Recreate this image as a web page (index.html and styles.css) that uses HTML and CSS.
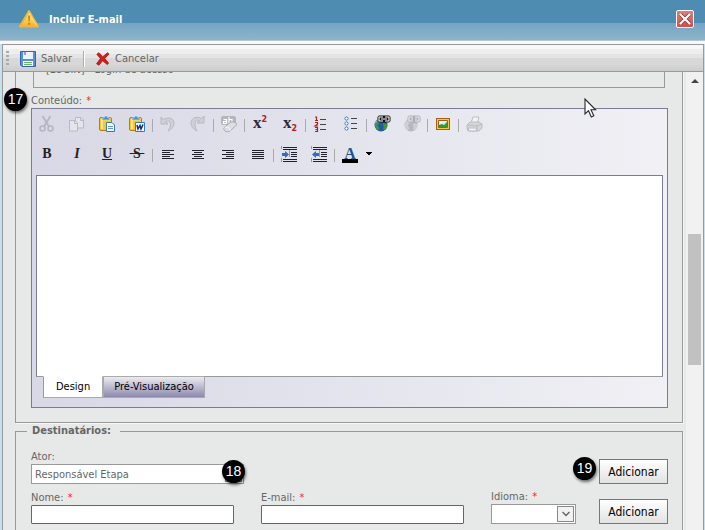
FILE: index.html
```html
<!DOCTYPE html>
<html lang="pt-BR">
<head>
<meta charset="utf-8">
<meta name="viewport" content="width=device-width, initial-scale=1">
<title>Incluir E-mail</title>
<link rel="stylesheet" href="styles.css">
</head>
<body>
<header class="titlebar">
  <svg class="warn" width="22" height="20" viewBox="0 0 22 20"><defs><linearGradient id="gw" x1="0" y1="0" x2="0" y2="1"><stop offset="0" stop-color="#fff0a0"/><stop offset=".5" stop-color="#fdd560"/><stop offset="1" stop-color="#f6ae2c"/></linearGradient></defs><path d="M11 2 20 17.500H2Z" fill="url(#gw)" stroke="#f2b53a" stroke-width="2" stroke-linejoin="round"/><path d="M11 3.500 18.500 16.500" stroke="#fff3b8" stroke-width="1" opacity=".6"/><path d="M10 6.500h2.200l-.5 6h-1.200z" fill="#c98a20"/><circle cx="11.100" cy="14.800" r="1.200" fill="#c98a20"/></svg>
  <h1>Incluir E-mail</h1>
  <button class="close" aria-label="Fechar"><svg width="18" height="18" viewBox="0 0 18 18"><defs><linearGradient id="gc" x1="0" y1="0" x2="0" y2="1"><stop offset="0" stop-color="#d98482"/><stop offset="1" stop-color="#d34b46"/></linearGradient></defs><rect x=".5" y=".5" width="17" height="17" rx="1.500" fill="url(#gc)" stroke="#fff"/><path d="M4.500 4.500 13.500 13.500M13.500 4.500 4.500 13.500" stroke="#833" stroke-width="3.600"/><path d="M4 4 14 14M14 4 4 14" stroke="#fff" stroke-width="2.200"/></svg></button>
</header>
<main class="frame">
  <nav class="commands">
    <span class="grip"></span>
    <button class="command"><svg width="16" height="16" viewBox="0 0 16 16"><path d="M.5.5h15v15H2L.5 14Z" fill="#5c8edc" stroke="#3562b4"/><path d="M3 1h10v7H3z" fill="#eaf3ff"/><path d="M3 1h3v3H3z" fill="#d8e8fb"/><path d="M5 1v3" stroke="#3562b4"/><path d="M3 10h10v5H3z" fill="#f6faf4"/><path d="M4 11.500h8M4 13.500h8" stroke="#69b65e"/></svg>Salvar</button>
    <span class="divider"></span>
    <button class="command"><svg width="14" height="14" viewBox="0 0 14 14"><path d="M.8 2.200 3 .7 6.800 4.700 11.500.8 13 2 8.800 6.500 12.600 11 11.300 12.600 6.600 8.700 3 13.200.6 11.800 4.400 6.500Z" fill="#ce2119" stroke="#aa1712" stroke-width=".8"/></svg>Cancelar</button>
  </nav>
  <div class="viewport">
    <div class="page">
      <section class="group message">
        <div class="hints">[LOGIN] - Login de acesso</div>
        <div class="label" id="content-label">Conteúdo: <i>*</i></div>
        <div class="editor">
          <div class="tools">
            <div class="set">
              <button aria-label="Recortar"><svg viewBox="0 0 18 18" fill="none" stroke="#b6b6c0"><path d="M4.500 1 11 11.500M12.500 1 6 11.500" stroke-width="1.800"/><circle cx="4.500" cy="13.500" r="2.500" stroke-width="1.600"/><circle cx="12.500" cy="13.500" r="2.500" stroke-width="1.600"/></svg></button>
              <button aria-label="Copiar"><svg viewBox="0 0 18 18" fill="#e4e4ec" stroke="#b9b9c2"><path d="M7.500 2.500H13L15.500 5v8h-8z"/><path d="M1.500 5.500H7L9.500 8v8h-8z"/><path d="M6.500 6v2.500H9M12.500 3v2.500H15"/></svg></button>
              <button aria-label="Colar"><svg viewBox="0 0 18 18"><rect x="1.500" y="2.500" width="12" height="13" rx="1.500" fill="#f6c62d" stroke="#b77c16"/><path d="M3 4h2v10H3" fill="#ffe785"/><path d="M4 3h2l1-2h2l1 2h2v2H4z" fill="#4f91c9" stroke="#dcebf4" stroke-width=".6"/><path d="M8.500 7.500H14l2.500 2.500v6.500h-8z" fill="#f6faff" stroke="#397bc0"/><path d="M10 11.500h5M10 13.500h5" stroke="#6499cf"/></svg></button>
              <button aria-label="Colar do Word"><svg viewBox="0 0 18 18"><rect x="1.500" y="2.500" width="12" height="13" rx="1.500" fill="#f6c62d" stroke="#b77c16"/><path d="M3 4h2v10H3" fill="#ffe785"/><path d="M4 3h2l1-2h2l1 2h2v2H4z" fill="#4f91c9" stroke="#dcebf4" stroke-width=".6"/><path d="M7.500 7.500h9v9h-9z" fill="#f6faff" stroke="#397bc0"/><path d="M9 10l1 4 2-3.500 1 3.500 2-4.500" fill="none" stroke="#172f7e" stroke-width="1.500"/></svg></button>
            </div>
            <div class="set">
              <button aria-label="Desfazer"><svg viewBox="0 0 18 18"><path d="M2 2v7h7L6.500 6.800C9 5.500 11.500 6.500 11.500 9c0 2.500-1 4.500-2.500 7 4-2 6-4.500 6-8C15 3 9 1.500 4.500 4.600Z" fill="#cfcfd8" stroke="#b4b4be" stroke-width=".9"/></svg></button>
              <button aria-label="Refazer"><svg viewBox="0 0 18 18"><path d="M15 1v7H8l2.500-2.200C8 4.500 6 6 6 9c0 2.500.5 4.500 2 7-4-2-6-4.500-6-8C2 3 8 .5 12.500 3.600Z" fill="#cfcfd8" stroke="#b4b4be" stroke-width=".9"/></svg></button>
            </div>
            <div class="set">
              <button aria-label="Limpar formatação"><svg viewBox="0 0 18 18"><rect x="1" y="1" width="15" height="9" rx="2" fill="#b5b5be"/><g fill="none" stroke="#fff" stroke-width="1.200"><path d="M3.500 4.500h3v4M6.500 6.500h-3v2h3M9 2v6.500h3v-4H9"/></g><path d="M4.500 12.500 10 7.500c1-1 5-.5 6 .5s.5 2-.5 3L10 16c-1 1-4 1-5 0s-2-2-.5-3.500Z" fill="#dddde3" stroke="#aaaab3"/><path d="M5 12.500c2-1 5 0 5.500 3" fill="none" stroke="#fff"/></svg></button>
            </div>
            <div class="set">
              <button class="script" aria-label="Sobrescrito">x<sup>2</sup></button>
              <button class="script" aria-label="Subscrito">x<sub>2</sub></button>
            </div>
            <div class="set">
              <button aria-label="Lista numerada"><svg viewBox="0 0 18 18"><path d="M8 4.500h6M8 9.500h6M8 14.500h6" stroke="#444"/><path d="M3 2h1.500v3.500M3 5.500h3M3 7.500h2.500v1.700L3 11h3M3 12.500h2.500v4H3M3.500 14.500h2" fill="none" stroke="#b3201b" stroke-width="1.200"/></svg></button>
              <button aria-label="Lista com marcadores"><svg viewBox="0 0 18 18"><path d="M9 3.500h6M9 8.500h6M9 13.500h6" stroke="#444"/><g fill="#fff" stroke="#3f7ac0"><circle cx="4.500" cy="3.500" r="1.600"/><circle cx="4.500" cy="8.500" r="1.600"/><circle cx="4.500" cy="13.500" r="1.600"/></g></svg></button>
            </div>
            <div class="set">
              <button aria-label="Inserir link"><svg viewBox="0 0 18 18"><circle cx="8" cy="10" r="6.500" fill="#1e5aa6"/><path d="M3 6c2-2 4-1 4 1s-3 2-2 4 2 3 0 4c-3-1-4-5-2-9ZM10 8l4 1c1 3-1 6-3 6-2-2 1-3-1-5Z" fill="#419539"/><path d="M2.500 8c1-2 2-3 4-3.500" stroke="#9cc9ec" fill="none"/><rect x="4.500" y=".5" width="13" height="7" rx="2" fill="#111"/><path d="M10 2H6v4h4M12 2h4v4h-4M8 4h6" fill="none" stroke="#fff" stroke-width="1.100"/></svg></button>
              <button aria-label="Remover link"><svg viewBox="0 0 18 18"><circle cx="8" cy="10" r="6.500" fill="#b8b8bf"/><path d="M3 6c2-2 4-1 4 1s-3 2-2 4 2 3 0 4c-3-1-4-5-2-9ZM10 8l4 1c1 3-1 6-3 6-2-2 1-3-1-5Z" fill="#cfcfd5"/><rect x="4.500" y=".5" width="13" height="7" rx="2" fill="#adadb5"/><path d="M10 2H6v4h4M12 2h4v4h-4M8 4h2M12 4h2" fill="none" stroke="#eee" stroke-width="1.100"/></svg></button>
            </div>
            <div class="set">
              <button aria-label="Inserir imagem"><svg viewBox="0 0 18 18"><rect x="2.500" y="3.500" width="13" height="11" fill="#f9c73d" stroke="#a95b14"/><path d="M4.500 5.500h9v7h-9z" fill="#d5edf9" stroke="#8b6717"/><path d="M5 10l3-1 2 1 3-3v5H5z" fill="#329735"/><circle cx="7" cy="7.500" r="1" fill="#fff"/></svg></button>
            </div>
            <div class="set">
              <button aria-label="Imprimir"><svg viewBox="0 0 18 18" stroke="#bcbcc3"><path d="M6 8 8 2h6l-2 7z" fill="#f3f3f6"/><path d="M2 10l3-3h9l3 2v4l-3 3H3l-1-3Z" fill="#d5d5da"/><path d="M2 10l10 1 5-2M12 11v5" fill="none"/><path d="M3 13h8l1 2-2 1H4z" fill="#f3f3f5"/></svg></button>
            </div>
          </div>
          <div class="tools">
            <div class="set serif">
              <button><b>B</b></button>
              <button><em>I</em></button>
              <button><u>U</u></button>
              <button><s>&nbsp;S&nbsp;</s></button>
            </div>
            <div class="set">
              <button aria-label="Alinhar à esquerda"><svg viewBox="0 0 18 18"><path d="M3 5.500h12M3 7.500h8M3 9.500h12M3 11.500h8M3 13.500h12" stroke="#22222e"/></svg></button>
              <button aria-label="Centralizar"><svg viewBox="0 0 18 18"><path d="M3 5.500h12M5 7.500h8M3 9.500h12M5 11.500h8M3 13.500h12" stroke="#22222e"/></svg></button>
              <button aria-label="Alinhar à direita"><svg viewBox="0 0 18 18"><path d="M3 5.500h12M7 7.500h8M3 9.500h12M7 11.500h8M3 13.500h12" stroke="#22222e"/></svg></button>
              <button aria-label="Justificar"><svg viewBox="0 0 18 18"><path d="M3 5.500h12M3 7.500h12M3 9.500h12M3 11.500h12M3 13.500h12" stroke="#22222e"/></svg></button>
            </div>
            <div class="set">
              <button aria-label="Aumentar recuo"><svg viewBox="0 0 18 18"><path d="M3 2.500h14M3 4.500h14M11 7.500h6M11 9.500h6M11 11.500h6M3 14.500h14M3 16.500h14" stroke="#22222e"/><path d="M1.500 1v3M1.500 13v4M9.500 5v7" stroke="#9999a5"/><path d="M2 8h3V6l4 3.500L5 13v-2H2z" fill="#326bc0"/></svg></button>
              <button aria-label="Diminuir recuo"><svg viewBox="0 0 18 18"><path d="M3 2.500h14M3 4.500h14M11 7.500h6M11 9.500h6M11 11.500h6M3 14.500h14M3 16.500h14" stroke="#22222e"/><path d="M1.500 1v3M1.500 13v4M9.500 5v7" stroke="#9999a5"/><path d="M9 8H6V6L2 9.500 6 13v-2h3z" fill="#326bc0"/></svg></button>
            </div>
            <div class="set">
              <button class="color"><span>A</span></button>
              <button class="drop" aria-label="Escolher cor"><svg class="caret" viewBox="0 0 6 4"><path d="M0 0h6v1H5v1H4v1H2V2H1V1H0z"/></svg></button>
            </div>
          </div>
          <textarea class="canvas" aria-labelledby="content-label"></textarea>
          <div class="tabs">
            <button class="tab active">Design</button>
            <button class="tab">Pré-Visualização</button>
          </div>
        </div>
        <span class="badge badge-content">17</span>
      </section>
      <fieldset class="group recipients">
        <legend>Destinatários:</legend>
        <div class="row">
          <div class="field actor">
            <label for="actor">Ator:</label>
            <div class="pick">
              <input id="actor" class="combo" value="Responsável Etapa">
              <span class="arrow"></span>
            </div>
            <span class="badge badge-actor">18</span>
          </div>
          <div class="action"><button class="add">Adicionar</button><span class="badge badge-add">19</span></div>
        </div>
        <div class="row people">
          <div class="field name"><label for="name">Nome: <i>*</i></label><input id="name"></div>
          <div class="field mail"><label for="mail">E-mail: <i>*</i></label><input id="mail"></div>
          <div class="field lang"><label for="lang">Idioma: <i>*</i></label>
            <div class="pick"><select id="lang"><option></option></select><span class="arrow"><svg width="8" height="6" viewBox="0 0 8 6"><path d="M.5 1 4 4.500 7.500 1" fill="none" stroke="#666" stroke-width="1.500"/></svg></span></div></div>
          <div class="action"><button class="add">Adicionar</button></div>
        </div>
      </fieldset>
    </div>
    <div class="scrollbar"><svg width="8" height="5" viewBox="0 0 8 5"><path d="M4 0 8 4H0z" fill="#444"/></svg><span class="thumb"></span></div>
  </div>
</main>
<svg class="pointer" width="13" height="21" viewBox="0 0 13 21"><path d="M1 1v15l3.500-3.300 2.800 6.300 2.500-1.200-2.800-6h4.600Z" fill="#fff" stroke="#26262e" stroke-width="1.100"/></svg>
</body>
</html>
```
FILE: styles.css
```css
* { box-sizing: border-box; }
body {
  margin: 0;
  height: 100vh;
  display: flex;
  flex-direction: column;
  overflow: hidden;
  background: #c5e0ee;
  color: #666;
  font: 11px/14px "DejaVu Sans Condensed", Tahoma, sans-serif;
}
button, input, select, textarea { font: inherit; color: inherit; margin: 0; padding: 0; border-radius: 0; }
button { background: none; border: 0; }
svg { display: block; flex: none; }
i { color: #f22; font-style: normal; margin-left: 1px; }

.titlebar {
  flex: none;
  display: flex;
  align-items: center;
  height: 44px;
  padding: 0 11px 4px 18px;
  border-bottom: 3px solid #f6f8fa;
  background: linear-gradient(#4f8cb2 0 23px, #74a5c2 23px, #8db5cc 40px, #b9c6cf 40px);
}
.titlebar h1 { margin: 2px auto 0 9px; color: #fff; font-size: 11px; }
.close { width: 18px; height: 18px; }

.frame {
  flex: 1;
  min-height: 0;
  margin: 0 1px 0 2px;
  display: flex;
  flex-direction: column;
  border: 1px solid #999;
  border-bottom: 0;
  background: #e6e9e8;
}
.commands {
  flex: none;
  height: 27px;
  display: flex;
  align-items: center;
  padding: 1px 0 0 3px;
  border-bottom: 1px solid #999;
  background: linear-gradient(#f7f7f7 0 4px, #eee 4px 9px, #e4e4e4 9px 13px, #d8d8d8 13px 19px, #ccc);
}
.grip { width: 3px; height: 15px; margin-right: 11px; background: repeating-linear-gradient(#aaa 0 2px, transparent 2px 4px); }
.command { display: flex; align-items: center; gap: 5px; }
.divider { width: 2px; height: 16px; margin: 0 11px; border-left: 1px solid #aaa; border-right: 1px solid #fff; }

.viewport { flex: 1; min-height: 0; display: flex; overflow: hidden; }
.page { flex: 1; min-width: 0; padding: 0 3px 0 12px; margin-top: -12px; }
.group { position: relative; margin: 0; border: 1px solid #999; box-shadow: 1px 1px #f5f6f6; }
.message { padding: 0 14px 14px 15px; }
.hints {
  height: 27px;
  margin: 0 3px 0 2px;
  padding-left: 12px;
  border: solid #999;
  border-width: 0 1px 1px;
  line-height: 18px;
}
.label { padding-top: 6px; }

.editor {
  padding: 0 4px 9px;
  border: 1px solid #7b7b98;
  background: linear-gradient(90deg, #d8d8e6, #f0f0f5);
}
.tools { display: flex; height: 30px; margin-left: -4px; }
.set { display: flex; align-items: center; }
.set + .set { background: linear-gradient(#aaa, #aaa) 0 60% / 1px 13px no-repeat; padding-left: 1px; }
.set button { width: 30px; height: 30px; display: flex; align-items: center; justify-content: center; }
.set svg { width: 18px; height: 18px; }
.set .caret { width: 6px; height: 4px; }
.set .drop { width: 8px; }
.serif button { color: #222; font: bold 14px "Liberation Serif", serif; }
.set .script { color: #2a2a35; font: bold 17px "Liberation Serif", serif; padding-bottom: 3px; }
.script sup, .script sub { color: #b3201b; font: bold 8px "DejaVu Sans", sans-serif; }
.script sup { margin-bottom: 6px; }
.script sub { margin-top: 12px; }
.color span { width: 16px; height: 17px; text-align: center; color: #20558c; font: bold 16px/15px "Liberation Serif", serif; border-bottom: 4px solid #000; }
.set .color { padding-top: 1px; }
.canvas {
  display: block;
  width: 100%;
  height: 202px;
  margin-top: 6px;
  border: 1px solid #7b7b98;
  border-bottom-color: #999;
  background: #fff;
  resize: none;
  outline: 0;
}
.tabs { display: flex; margin: -1px 0 0 7px; }
.tab {
  height: 22px;
  padding: 0 10px;
  color: #000;
  border: 1px solid #aaa;
  background: linear-gradient(#ebebf1, #8d89ad);
}
.tab.active { padding: 0 12px; border-top-color: #fff; border-left-color: #999; background: #fff; }

.recipients { margin-top: 1px; padding: 12px 14px 16px 15px; min-width: 0; }
legend { padding: 0 9px 0 5px; margin-left: -4px; font-weight: bold; }
.row { display: flex; align-items: flex-end; }
.row + .row { margin-top: 6px; }
.field { position: relative; display: flex; flex-direction: column; }
.field input { width: 100%; height: 19px; border: 1px solid #666; border-radius: 1px; background: #fff; }
.field .combo { display: block; height: 20px; padding-left: 3px; border-color: #999; border-radius: 0; }
.actor { flex: 0 1 213px; }
.name, .mail { flex: 1 1 203px; margin-right: 27px; }
.lang { flex: none; width: 85px; }
.pick { position: relative; height: 20px; }
.pick select { width: 100%; height: 20px; appearance: none; border: 1px solid #999; background: #fff; }
.arrow { position: absolute; top: 2px; right: 2px; width: 17px; height: 16px; display: grid; place-items: center; border: 1px solid #888; background: #f2f2f2; pointer-events: none; }
.action { position: relative; flex: none; margin-left: auto; }
.people .action { margin-left: 23px; }
.add { display: block; width: 69px; height: 25px; color: #000; font-size: 12px; border: 1px solid #777; background: linear-gradient(#fff, #e2e2e2); }

.badge {
  position: absolute;
  width: 23px;
  height: 23px;
  border-radius: 50%;
  background: #000;
  color: #fff;
  text-align: center;
  font: 14px/22px "Liberation Sans", sans-serif;
  box-shadow: 1px 2px 3px #0008;
}
.badge-content { left: -12px; top: 27px; }
.badge-actor { right: -1px; bottom: 1px; }
.badge-add { right: 72px; top: -2px; }
.scrollbar { flex: none; width: 17px; padding-top: 7px; display: flex; flex-direction: column; align-items: center; background: #f1f1f1; }
.thumb { width: 13px; height: 131px; margin-top: 150px; background: #c1c1c1; }
.pointer { position: absolute; left: 584px; top: 98px; }
```
